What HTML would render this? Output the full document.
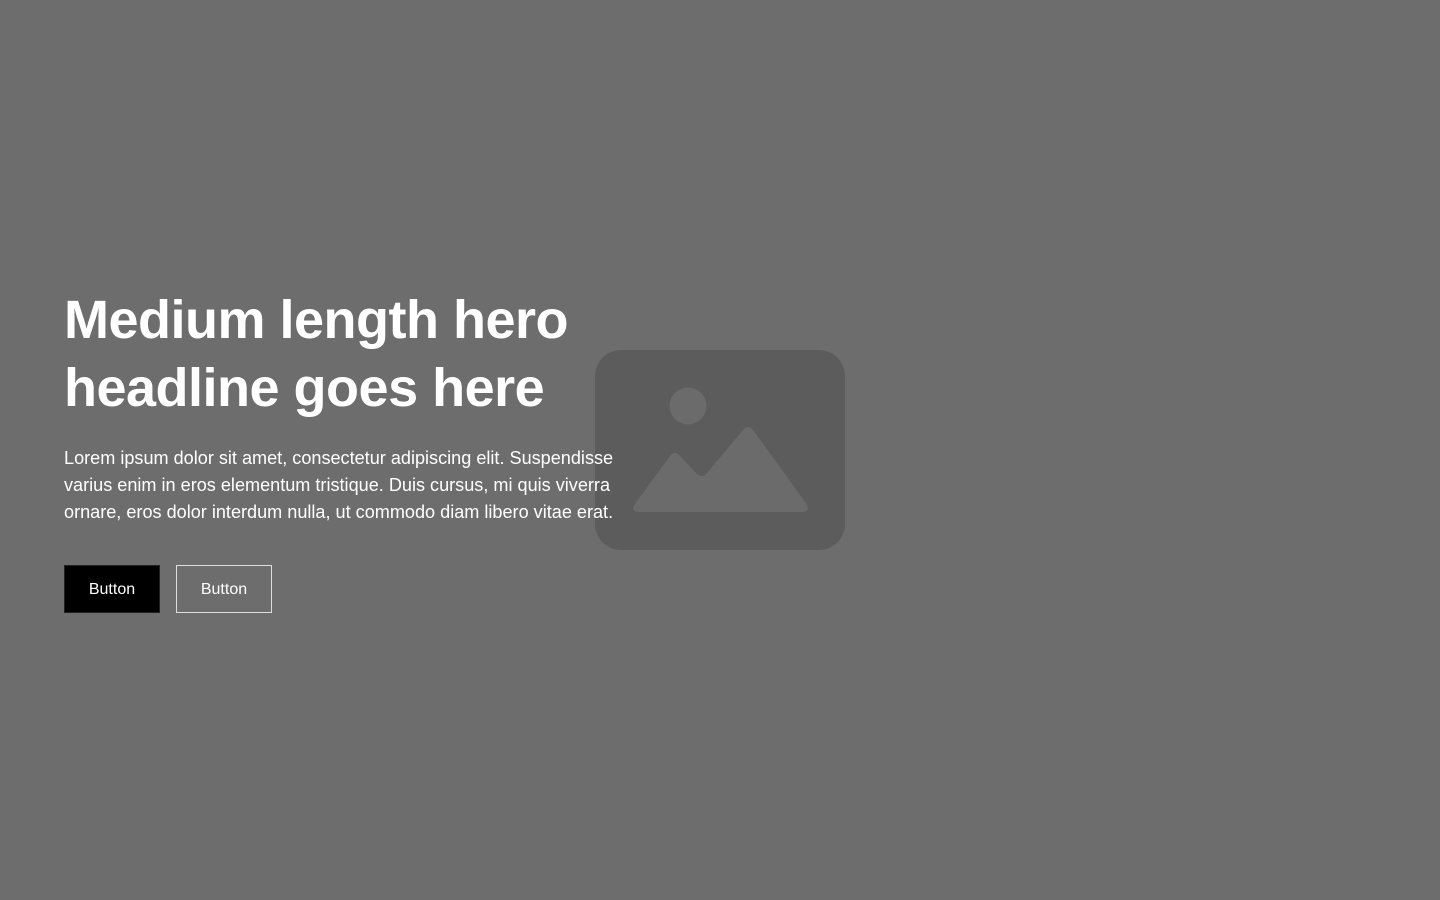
<!DOCTYPE html>
<html><head><style>
body{margin:0;width:1440px;height:900px;background:#6d6d6d;font-family:"Liberation Sans",Arial,sans-serif;position:relative;overflow:hidden}
svg{position:absolute;left:595px;top:350px}
.c{position:absolute;left:64px;top:286px;width:580px;color:#fff}
h1{margin:0;font-size:54px;line-height:68px;font-weight:700;letter-spacing:-0.5px}
p{margin:23px 0 0;font-size:18.1px;line-height:27px}
.b{position:absolute;top:565px;height:48px;width:96px;box-sizing:border-box;color:#fff;font-size:16px;display:flex;align-items:center;justify-content:center;padding-top:2px}
</style></head><body>
<svg width="250" height="200" viewBox="0 0 250 200">
<rect width="250" height="200" rx="26" fill="#5c5c5c"/>
<circle cx="93" cy="56" r="18.5" fill="#6b6b6b"/>
<path d="M40 154 L75 106 Q80 100 85 106 L101 123 Q107 129 112 123 L148 80 Q153 74 158 80 L211 153 Q216 162 207 162 L45 162 Q35 162 40 154Z" fill="#6b6b6b"/>
</svg>
<div class="c">
<h1>Medium length hero headline goes here</h1>
<p>Lorem ipsum dolor sit amet, consectetur adipiscing elit. Suspendisse varius enim in eros elementum tristique. Duis cursus, mi quis viverra ornare, eros dolor interdum nulla, ut commodo diam libero vitae erat.</p>
</div>
<div class="b" style="left:64px;background:#000;border:1px solid #222">Button</div>
<div class="b" style="left:176px;border:1px solid #ddd">Button</div>
</body></html>
